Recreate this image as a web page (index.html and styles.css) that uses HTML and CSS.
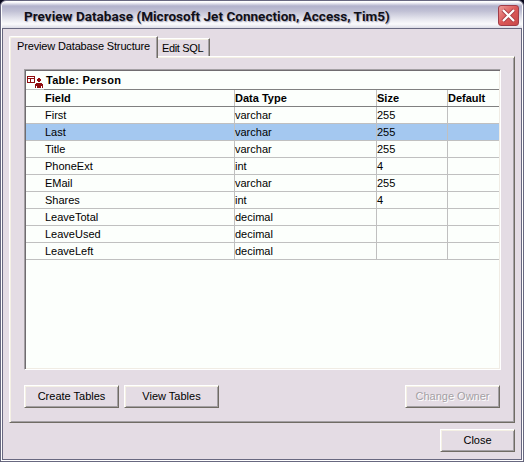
FILE: index.html
```html
<!DOCTYPE html>
<html lang="en">
<head>
<meta charset="utf-8">
<title>Preview Database</title>
<link rel="stylesheet" href="styles.css">
</head>
<body>
<div class="window">
  <header class="titlebar">
    <h1>Preview Database (Microsoft Jet Connection, Access, Tim5)</h1>
    <button class="close-x" aria-label="Close window"><svg width="15" height="15" viewBox="0 0 15 15"><path d="M2 2L13 13M13 2L2 13" stroke="#a84048" stroke-width="4"/><path d="M2 2L13 13M13 2L2 13" stroke="#fff" stroke-width="2.2"/></svg></button>
  </header>
  <main class="client">
    <nav class="tabs">
      <div class="tab active"><span>Preview Database Structure</span></div>
      <div class="tab"><span>Edit SQL</span></div>
    </nav>
    <section class="page">
      <div class="listbox">
        <div class="caption">
          <svg class="icon" width="17" height="12" viewBox="0 0 17 12" shape-rendering="crispEdges"><path fill="#900c10" d="M0 0h8v7H0zM11 2h2v1h1v2h-1v1h-2V5h-1V3h1zM9 7h6v1h1v4H8V8h1z"/><path fill="#fff" d="M1 1h6v1H1zM1 3h2v3H1zM4 3h3v3H4zM9 10h1v2H9zM14 10h1v2h-1z"/></svg>
          <strong>Table: Person</strong>
        </div>
        <div class="row head"><b>Field</b><b>Data Type</b><b>Size</b><b>Default</b></div>
        <div class="row"><span>First</span><span>varchar</span><span>255</span><span></span></div>
        <div class="row selected"><span>Last</span><span>varchar</span><span>255</span><span></span></div>
        <div class="row"><span>Title</span><span>varchar</span><span>255</span><span></span></div>
        <div class="row"><span>PhoneExt</span><span>int</span><span>4</span><span></span></div>
        <div class="row"><span>EMail</span><span>varchar</span><span>255</span><span></span></div>
        <div class="row"><span>Shares</span><span>int</span><span>4</span><span></span></div>
        <div class="row"><span>LeaveTotal</span><span>decimal</span><span></span><span></span></div>
        <div class="row"><span>LeaveUsed</span><span>decimal</span><span></span><span></span></div>
        <div class="row"><span>LeaveLeft</span><span>decimal</span><span></span><span></span></div>
      </div>
      <div class="actions">
        <button class="btn">Create Tables</button>
        <button class="btn">View Tables</button>
        <button class="btn disabled" disabled>Change Owner</button>
      </div>
    </section>
    <footer class="footer"><button class="btn close">Close</button></footer>
  </main>
</div>
</body>
</html>
```
FILE: styles.css
```css
* { box-sizing: border-box; }
body { margin: 0; background: #08081c; font: 11px/16px "Liberation Sans", Arial, sans-serif; color: #000; overflow: hidden; }
.window { width: 524px; height: 462px; border: 1px solid #686880; border-radius: 6px 6px 0 0; background: #e4dce4; box-shadow: inset 0 0 0 1px #fff; padding: 1px; overflow: hidden; }
.titlebar { height: 26px; display: flex; align-items: flex-start; justify-content: space-between; padding: 3px 3px 0 22px; background: linear-gradient(#fff 0, #b2b2cc 4px, #c0c0d4 9px, #e6e6ee 17px, #fafafc 22px, #dcdce6 26px); border-radius: 4px 4px 0 0; }
.titlebar h1 { margin: 2px 0 0; font-family: Roboto, "Liberation Sans", sans-serif; font-size: 13.5px; line-height: 19px; font-weight: bold; letter-spacing: 0.03px; white-space: nowrap; color: #101018; text-shadow: 1px 1px 1px #a0a0b8; }
.close-x { width: 21px; height: 21px; margin: 0; padding: 0; display: flex; align-items: center; justify-content: center; border: 1px solid #a03c48; border-radius: 3px; background: linear-gradient(135deg, #ec9c98, #dc5858 50%, #c84848); }
.client { height: 432px; border: 1px solid #686880; padding: 7px 6px 0; }
.tabs { display: flex; align-items: flex-end; height: 20px; }
.tab { height: 18px; width: 52px; padding: 1px 0 0 4px; letter-spacing: -0.35px; white-space: nowrap; border-top: 1px solid #fff; border-right: 1px solid #706c64; box-shadow: inset -1px 0 #a4a0a4, inset 0 1px #f4f0e4; }
.tab.active { position: relative; width: 149px; height: 22px; margin-bottom: -2px; padding: 1px 0 0 7px; letter-spacing: -0.15px; border-left: 1px solid #fff; background: #e4dce4; box-shadow: inset -1px 0 #a4a0a4, inset 1px 1px #f4f0e4; border-top-left-radius: 2px; }
.page { width: 506px; height: 367px; padding: 12px 13px 0 14px; border: 1px solid; border-color: #fff #706c64 #706c64 #fff; box-shadow: inset 1px 1px #f4f0e4, inset -1px -1px #a4a0a4; }
.listbox { width: 477px; height: 301px; border: 1px solid; border-color: #a4a0a4 #fff #fff #a4a0a4; box-shadow: inset 1px 1px #706c70, inset -1px -1px #f0ece4; padding: 1px; background: #fcfffc; }
.caption { display: flex; height: 19px; padding-left: 1px; border-bottom: 1px solid; border-image: linear-gradient(90deg, #c0c0c0 19px, #808080 19px) 1; }
.caption .icon { margin-top: 5px; }
.caption strong { margin-left: 2px; line-height: 19px; letter-spacing: 0.25px; }
.row { display: grid; grid-template-columns: 208px 142px 71px 52px; height: 17px; border-bottom: 1px solid #c0c0c0; }
.row > * { border-left: 1px solid #c0c0c0; white-space: nowrap; }
.row > :first-child { padding-left: 19px; border-left: 0; }
.row.head { border-bottom-color: #808080; }
.selected { background: #a4c8f0; }
.actions { display: flex; gap: 5px; margin: 15px 1px 0 0; }
.btn { width: 95px; height: 23px; padding: 0 0 1px; border: 1px solid; border-color: #fff #706c64 #706c64 #fff; box-shadow: inset 1px 1px #f4f0e4, inset -1px -1px #a4a0a4; background: #e4dce4; color: #000; font: inherit; }
.btn.disabled { margin-left: auto; color: #a4a0a4; text-shadow: 1px 1px #fff; }
.footer { display: flex; justify-content: flex-end; margin-top: 6px; }
.btn.close { width: 75px; }
```
